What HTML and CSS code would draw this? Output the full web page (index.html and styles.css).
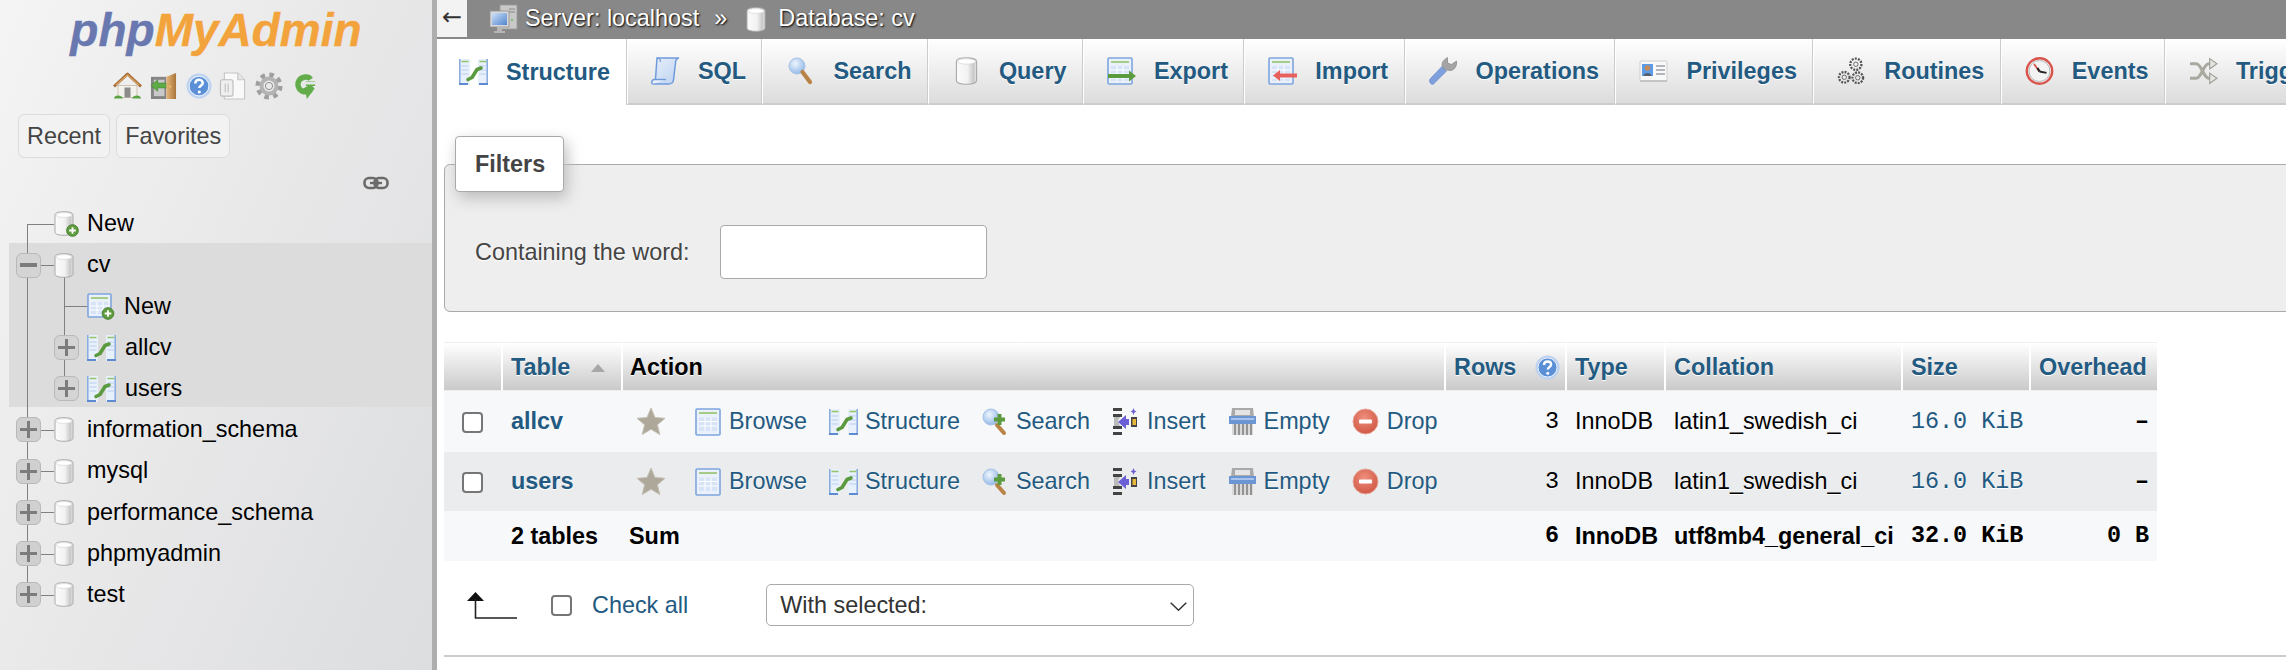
FILE: index.html
```html
<!DOCTYPE html>
<html lang="en">
<head>
<meta charset="utf-8">
<title>phpMyAdmin</title>
<link rel="stylesheet" href="styles.css">
</head>
<body>
<svg class="defs" xmlns="http://www.w3.org/2000/svg">
  <defs>
    <linearGradient id="gDb" x1="0" x2="1" y1="0" y2="0"><stop offset="0" stop-color="#fbfbfb"/><stop offset=".55" stop-color="#f2f2f2"/><stop offset=".85" stop-color="#c8c8c8"/><stop offset="1" stop-color="#e8e8e8"/></linearGradient>
    <linearGradient id="gBlue" x1="0" x2="1" y1="0" y2="1"><stop offset="0" stop-color="#cfe0f8"/><stop offset="1" stop-color="#4f85cf"/></linearGradient>
    <radialGradient id="gLens" cx=".4" cy=".35" r=".7"><stop offset="0" stop-color="#eef5fd"/><stop offset="1" stop-color="#8fb6e6"/></radialGradient>
    <radialGradient id="gDrop" cx=".45" cy=".35" r=".7"><stop offset="0" stop-color="#ee8f7c"/><stop offset="1" stop-color="#cf5442"/></radialGradient>
    <linearGradient id="gDoor" x1="0" x2="1" y1="0" y2="0"><stop offset="0" stop-color="#e6b77c"/><stop offset="1" stop-color="#a9743a"/></linearGradient>
    <linearGradient id="gScroll" x1="0" x2="1" y1="0" y2="1"><stop offset="0" stop-color="#e8f0fb"/><stop offset="1" stop-color="#bcd2f0"/></linearGradient>
  </defs>
  <symbol id="i-db" viewBox="0 0 20 25">
    <path d="M1 4C1 1.6 5 .7 10 .7S19 1.6 19 4V21C19 23.3 15 24.3 10 24.3S1 23.3 1 21Z" fill="url(#gDb)" stroke="#a9a9a9"/>
    <ellipse cx="10" cy="4" rx="8" ry="2.4" fill="#fff" stroke="#d0d0d0" stroke-width=".6"/>
  </symbol>
  <symbol id="i-dbnew" viewBox="0 0 25 26">
    <path d="M1 4C1 1.6 5 .7 10 .7S19 1.6 19 4V21C19 23.3 15 24.3 10 24.3S1 23.3 1 21Z" fill="url(#gDb)" stroke="#a9a9a9"/>
    <ellipse cx="10" cy="4" rx="8" ry="2.4" fill="#fff" stroke="#d0d0d0" stroke-width=".6"/>
    <circle cx="18.5" cy="19.5" r="5.8" fill="#5f9c40" stroke="#467f2c"/>
    <path d="M18.5 16.2v6.6M15.2 19.5h6.6" stroke="#fff" stroke-width="1.8"/>
  </symbol>
  <symbol id="i-table" viewBox="0 0 26 28">
    <rect x="1" y="1" width="24" height="26" rx="1" fill="#eaf1fb" stroke="#7fa5de" stroke-width="1.6"/>
    <path d="M4 5h18" stroke="#93c46a" stroke-width="1.6"/>
    <path d="M4 9.5h18v13.5H4z" fill="#d7e4f8"/>
    <path d="M4 13.5h18M4 18h18M10 9.5V23M16 9.5V23" stroke="#fff" stroke-width="1"/>
  </symbol>
  <symbol id="i-tablenew" viewBox="0 0 28 27">
    <rect x="1" y="1" width="23" height="23" rx="1" fill="#eaf1fb" stroke="#7fa5de" stroke-width="1.6"/>
    <path d="M4 5h17" stroke="#93c46a" stroke-width="1.6"/>
    <path d="M4 9h17v12H4z" fill="#d7e4f8"/>
    <path d="M4 13h17M4 17h17M10 9v12M16 9v12" stroke="#fff" stroke-width="1"/>
    <circle cx="21" cy="20.5" r="5.8" fill="#5f9c40" stroke="#467f2c"/>
    <path d="M21 17.2v6.6M17.7 20.5h6.6" stroke="#fff" stroke-width="1.8"/>
  </symbol>
  <symbol id="i-struct" viewBox="0 0 29 26">
    <path d="M0 0h11v26H0zM19 0h10v26H19z" fill="#e8f0fb"/>
    <path d="M.8 0v26M28.200 0v26" stroke="#85a9e0" stroke-width="1.500"/>
    <path d="M2.500 2.500h7M20.500 2.500h7" stroke="#93c46a" stroke-width="1.500"/>
    <path d="M2.500 7h7M2.500 11h7M2.500 15h7M20.500 7h7M20.500 11h7M20.500 15h7" stroke="#b7cdee" stroke-width="1.200"/>
    <path d="M0 25h9M20 25h9" stroke="#5d8ad0" stroke-width="2"/>
    <path d="M9 20.500l4-2 5-8 4-1.500" fill="none" stroke="#5b9a3e" stroke-width="3.600" stroke-linecap="round" stroke-linejoin="round"/>
  </symbol>
  <symbol id="i-star" viewBox="0 0 30 29">
    <path d="M15 1l4 9.500 10 .8-7.600 6.500 2.400 9.700L15 22.300l-8.800 5.200 2.400-9.700L1 11.300l10-.8z" fill="#aea89a" stroke="#c4bfb3" stroke-linejoin="round"/>
  </symbol>
  <symbol id="i-search" viewBox="0 0 25 28">
    <circle cx="9" cy="9" r="8" fill="url(#gLens)" stroke="#a8c3e6"/>
    <path d="M14.500 15l7.500 10" stroke="#b98345" stroke-width="4.200" stroke-linecap="round"/>
  </symbol>
  <symbol id="i-searchadd" viewBox="0 0 25 28">
    <circle cx="9" cy="9" r="8" fill="url(#gLens)" stroke="#a8c3e6"/>
    <path d="M15 17l7 8" stroke="#b98345" stroke-width="4" stroke-linecap="round"/>
    <path d="M17.500 6v11M12 11.500h11" stroke="#5b9a3e" stroke-width="4"/>
  </symbol>
  <symbol id="i-insert" viewBox="0 0 26 29">
    <path d="M1 1h9v3H1zM1 7h9v3H1zM1 19h9v3H1zM1 25h9v3H1z" fill="#444"/>
    <path d="M2 10h6l-2 4 2 5H2z" fill="#bbb"/>
    <path d="M6 15l8-7v4h3v6h-3v4z" fill="#6b5fd6"/>
    <path d="M19 10h6v10h-6z" fill="#444"/>
    <path d="M20.500 12h3.500v6h-3.500z" fill="#e9b83a"/>
    <path d="M21.500 1l1 2.500 2 1-2 1-1 2.500-1-2.500-2-1 2-1z" fill="#6b5fd6"/>
  </symbol>
  <symbol id="i-empty" viewBox="0 0 29 29">
    <path d="M4 1h21l1 9H3z" fill="#a9a9a9"/>
    <path d="M7 3h15v5H7z" fill="#e4e4e4"/>
    <path d="M1 9h27v8H1z" fill="#6c95d4"/>
    <path d="M3 11h23v2H3z" fill="#a9c3ea"/>
    <path d="M4 17h21v11H4z" fill="#d9d9d9"/>
    <path d="M7 17v11M11 17v11M15 17v11M19 17v11M23 17v11" stroke="#777" stroke-width="1.400"/>
  </symbol>
  <symbol id="i-drop" viewBox="0 0 27 29">
    <circle cx="13.500" cy="14.500" r="12.500" fill="url(#gDrop)" stroke="#e6a99c"/>
    <rect x="7" y="12.500" width="13" height="4" rx="1" fill="#fff"/>
  </symbol>
  <symbol id="i-help" viewBox="0 0 25 25">
    <circle cx="12.500" cy="12.500" r="12" fill="#bcd2f0"/>
    <circle cx="12.500" cy="12.500" r="9.500" fill="#5b8fd6" stroke="#e6eefb" stroke-width="1"/>
    <path d="M9 10c0-2.500 1.700-3.500 3.600-3.500s3.500 1.200 3.500 3c0 2.600-3.300 2.600-3.300 5" fill="none" stroke="#fff" stroke-width="2.400"/>
    <circle cx="12.800" cy="18.300" r="1.500" fill="#fff"/>
  </symbol>
  <symbol id="i-house" viewBox="0 0 29 27">
    <path d="M5 13h19v12H5z" fill="#f3f1ec" stroke="#b9a58a" stroke-width=".6"/>
    <path d="M1 14L14.500 1.500 28 14" fill="none" stroke="#a86f38" stroke-width="3" stroke-linejoin="round"/>
    <path d="M3 12.500L14.500 2.500 26 12.500" fill="none" stroke="#d8a467" stroke-width="1.200"/>
    <path d="M11.500 15h6v10h-6z" fill="#8b8b8b"/>
    <path d="M1 26c0-4 8-4 9 0zM19 26c1-4 9-4 9 0z" fill="#5ba342"/>
  </symbol>
  <symbol id="i-exit" viewBox="0 0 28 29">
    <path d="M1 5h16v23H1z" fill="#858585"/>
    <path d="M4 8h11v17H4z" fill="#c9c9c9"/>
    <path d="M1 14l7-6v3.500h9v5H8V20z" fill="#5eac45" stroke="#3f7e2d" stroke-width=".6"/>
    <path d="M17 5l10-4v27H17z" fill="url(#gDoor)"/>
    <circle cx="21" cy="15" r="1" fill="#f2d05c"/>
  </symbol>
  <symbol id="i-docs" viewBox="0 0 29 29">
    <path d="M5 1h14l7 7v20H5z" fill="#f9f9f9" stroke="#c6c6c6" stroke-width="1.200"/>
    <path d="M19 1v7h7" fill="#e6e6e6" stroke="#c6c6c6" stroke-width="1.200"/>
    <rect x="1" y="8" width="13" height="17" rx="2" fill="#efefef" stroke="#bdbdbd" stroke-width="1.200"/>
    <path d="M6 12v9M9 12v9" stroke="#c9c9c9" stroke-width="1.400"/>
  </symbol>
  <symbol id="i-gear" viewBox="0 0 28 28">
    <circle cx="14" cy="14" r="11.300" fill="none" stroke="#9f9f9f" stroke-width="4.500" stroke-dasharray="4.500 4.380"/>
    <circle cx="14" cy="14" r="7.500" fill="none" stroke="#b3b3b3" stroke-width="4"/>
    <circle cx="14" cy="14" r="3.600" fill="none" stroke="#8f8f8f" stroke-width="1"/>
  </symbol>
  <symbol id="i-reload" viewBox="0 0 23 29">
    <path d="M18 7.500C15.500 4 9 4.500 6 8.500c-3 4.500-.5 11 5 12 3 .5 5.500-.5 7-2" fill="none" stroke="#62ad4a" stroke-width="5.500"/>
    <path d="M13 9.500h9.500V14.500H13zM8 18l10-5 4 4-8 11-1-5z" fill="#62ad4a"/>
    <path d="M13 10h10v3H13z" fill="#e6e7e8"/>
  </symbol>
  <symbol id="i-link" viewBox="0 0 26 14">
    <rect x="1.500" y="2" width="13" height="10" rx="4.500" fill="none" stroke="#6a6a6a" stroke-width="2.600"/>
    <rect x="11.500" y="2" width="13" height="10" rx="4.500" fill="none" stroke="#6a6a6a" stroke-width="2.600"/>
    <path d="M7 7h12" stroke="#6a6a6a" stroke-width="2.400"/>
  </symbol>
  <symbol id="i-computer" viewBox="0 0 29 30">
    <path d="M11 1h17v24H11z" fill="#c9c9c9" stroke="#9a9a9a" stroke-width=".8"/>
    <path d="M20 5h6M20 8h6" stroke="#8a8a8a"/>
    <circle cx="23" cy="16" r="1" fill="#63b74a"/>
    <rect x="1" y="7" width="19" height="16" fill="#d8d8d8" stroke="#8f8f8f" stroke-width=".8"/>
    <rect x="3" y="9" width="15" height="12" fill="url(#gBlue)"/>
    <path d="M8 23h5v4H8zM5 27h11v2H5z" fill="#b5b5b5"/>
  </symbol>
  <symbol id="i-sql" viewBox="0 0 29 28">
    <path d="M6 1h22c-2.500.5-3.500 2.500-3.500 5l-2 17c-.4 3-2.500 4-5 4H1.500c2-.8 2.700-2.500 3-5z" fill="url(#gScroll)" stroke="#6f9bdc" stroke-width="1.500"/>
    <path d="M6 1c3 0 3.500 2 3.500 4" fill="none" stroke="#6f9bdc" stroke-width="1.200"/>
    <path d="M1.500 27c-1.300-1.500-.8-4 1.500-4.500h12" fill="#e9f0fb" stroke="#6f9bdc" stroke-width="1.500"/>
  </symbol>
  <symbol id="i-export" viewBox="0 0 29 28">
    <rect x="1" y="1" width="24" height="26" rx="1" fill="#eaf1fb" stroke="#7fa5de" stroke-width="1.600"/>
    <path d="M4 5h18" stroke="#93c46a" stroke-width="1.600"/>
    <path d="M4 9h18v15H4z" fill="#d7e4f8"/>
    <path d="M4 13h18M4 17h18M4 21h18M10 9v15M16 9v15" stroke="#fff"/>
    <path d="M1 17h21v-3.500l7 5.500-7 5.500V21H1z" fill="#5b9a3e"/>
  </symbol>
  <symbol id="i-import" viewBox="0 0 29 28">
    <rect x="1" y="1" width="24" height="26" rx="1" fill="#eaf1fb" stroke="#7fa5de" stroke-width="1.600"/>
    <path d="M4 5h18" stroke="#93c46a" stroke-width="1.600"/>
    <path d="M4 9h18v15H4z" fill="#d7e4f8"/>
    <path d="M4 13h18M4 17h18M4 21h18M10 9v15M16 9v15" stroke="#fff"/>
    <path d="M29 16.500H12V13l-7 5.500 7 5.500v-3.500h17z" fill="#e8605c"/>
  </symbol>
  <symbol id="i-wrench" viewBox="0 0 29 28">
    <path d="M2.500 27c-2.500-1.500-2.200-4-1-5.500L13 9.500l4.500 4.500L6 25.500c-1 1.300-2.300 2.300-3.500 1.500z" fill="#7fa0dc" stroke="#6a8ccb" stroke-width=".8"/>
    <path d="M13.500 10c-1-3.500 0-6 3-8l2-1.500v5.500l4 1.500 5-3.500c.5 4-1 7.500-4 9-3 1-5 0-6 0z" fill="#a5a5a5" stroke="#8a8a8a" stroke-width=".8"/>
  </symbol>
  <symbol id="i-priv" viewBox="0 0 29 28">
    <rect x="1" y="4" width="27" height="20" rx="1" fill="#f8f8f8" stroke="#cfcfcf"/>
    <rect x="3" y="7" width="11" height="12" fill="#5c9ce6"/>
    <circle cx="8.500" cy="11" r="2.800" fill="#c58a5a"/>
    <path d="M4.500 19c0-4 8-4 8 0z" fill="#54606e"/>
    <path d="M17 9h9M17 13h9M17 17h9" stroke="#9a9fa8" stroke-width="1.600"/>
    <path d="M1 24h27" stroke="#bbb" stroke-width="1.500"/>
  </symbol>
  <symbol id="i-routines" viewBox="0 0 29 29">
    <g fill="none" stroke="#555" stroke-dasharray="2 1.200">
      <circle cx="19" cy="7.500" r="5.800" stroke-width="2.400"/>
      <circle cx="7" cy="21" r="5.500" stroke-width="2.400"/>
      <circle cx="21" cy="21.500" r="5.500" stroke-width="2.400"/>
    </g>
    <g fill="none" stroke="#666"><circle cx="19" cy="7.500" r="2.300"/><circle cx="7" cy="21" r="2.300"/><circle cx="21" cy="21.500" r="2.300"/></g>
  </symbol>
  <symbol id="i-clock" viewBox="0 0 29 28">
    <circle cx="14.500" cy="14" r="12.700" fill="#efefef" stroke="#d9534a" stroke-width="2.400"/>
    <circle cx="14.500" cy="14" r="10.500" fill="#f3f3f3" stroke="#b8b8b8"/>
    <path d="M14.500 14.500L9 7" stroke="#d9534a" stroke-width="1.800"/>
    <path d="M14.500 14.500l7 1.300" stroke="#222" stroke-width="1.800"/>
    <path d="M14.500 14.500l-2-3.500" stroke="#222" stroke-width="2.200"/>
  </symbol>
  <symbol id="i-trigger" viewBox="0 0 28 26">
    <path d="M1 6h6c5 0 7 14 12 14h3M1 20h6c5 0 7-14 12-14h3" fill="none" stroke="#a9a9a0" stroke-width="3"/>
    <path d="M20 1l7 5-7 5zM20 15l7 5-7 5z" fill="#e4e4e0" stroke="#9a9a92"/>
  </symbol>
  <symbol id="i-up" viewBox="0 0 50 27">
    <path d="M0 9L8.500 0 17 9z" fill="#111"/>
    <path d="M8.500 7v19H50" fill="none" stroke="#222" stroke-width="1.600"/>
  </symbol>
  <symbol id="i-chev" viewBox="0 0 17 9">
    <path d="M.7.7L8.500 8.200 16.300.7" fill="none" stroke="#333" stroke-width="1.500"/>
  </symbol>
</svg>

<div class="app">
  <aside class="side">
    <div class="logo"><span class="logo-php">php</span><span class="logo-my">MyAdmin</span></div>
    <div class="quick">
      <svg class="q q-house"><use href="#i-house"/></svg>
      <svg class="q q-exit"><use href="#i-exit"/></svg>
      <svg class="q q-help"><use href="#i-help"/></svg>
      <svg class="q q-docs"><use href="#i-docs"/></svg>
      <svg class="q q-gear"><use href="#i-gear"/></svg>
      <svg class="q q-reload"><use href="#i-reload"/></svg>
    </div>
    <div class="recent">
      <button class="pill" type="button">Recent</button>
      <button class="pill" type="button">Favorites</button>
    </div>
    <div class="linkrow"><svg class="link-ic"><use href="#i-link"/></svg></div>
    <div class="tree">
      <div class="row row-first">
        <span class="noexp"></span>
        <svg class="db-new"><use href="#i-dbnew"/></svg>
        <span class="name">New</span>
      </div>
      <div class="group">
        <div class="row">
          <span class="exp minus"></span>
          <svg class="db"><use href="#i-db"/></svg>
          <span class="name">cv</span>
          <span class="stem"></span>
        </div>
        <div class="row sub sub-new">
          <span class="noexp"></span>
          <span class="indent"></span>
          <svg class="tbl-new"><use href="#i-tablenew"/></svg>
          <span class="name">New</span>
        </div>
        <div class="row sub">
          <span class="noexp"></span>
          <span class="exp plus exp-sub"></span>
          <svg class="tbl"><use href="#i-struct"/></svg>
          <span class="name">allcv</span>
        </div>
        <div class="row sub sub-last">
          <span class="noexp"></span>
          <span class="exp plus exp-sub"></span>
          <svg class="tbl"><use href="#i-struct"/></svg>
          <span class="name">users</span>
        </div>
      </div>
      <div class="row"><span class="exp plus"></span><svg class="db"><use href="#i-db"/></svg><span class="name">information_schema</span></div>
      <div class="row"><span class="exp plus"></span><svg class="db"><use href="#i-db"/></svg><span class="name">mysql</span></div>
      <div class="row"><span class="exp plus"></span><svg class="db"><use href="#i-db"/></svg><span class="name">performance_schema</span></div>
      <div class="row"><span class="exp plus"></span><svg class="db"><use href="#i-db"/></svg><span class="name">phpmyadmin</span></div>
      <div class="row row-last"><span class="exp plus"></span><svg class="db"><use href="#i-db"/></svg><span class="name">test</span></div>
    </div>
  </aside>

  <main class="main">
    <header class="topbar">
      <span class="back">←</span>
      <svg class="top-computer"><use href="#i-computer"/></svg>
      <span class="crumb">Server: localhost</span>
      <span class="sep">»</span>
      <svg class="top-db"><use href="#i-db"/></svg>
      <span class="crumb">Database: cv</span>
    </header>

    <nav class="tabs">
      <a class="tab active"><svg class="tab-ic"><use href="#i-struct"/></svg>Structure</a>
      <a class="tab"><svg class="tab-ic"><use href="#i-sql"/></svg>SQL</a>
      <a class="tab"><svg class="tab-ic"><use href="#i-search"/></svg>Search</a>
      <a class="tab"><svg class="tab-ic"><use href="#i-db"/></svg>Query</a>
      <a class="tab"><svg class="tab-ic"><use href="#i-export"/></svg>Export</a>
      <a class="tab"><svg class="tab-ic"><use href="#i-import"/></svg>Import</a>
      <a class="tab"><svg class="tab-ic"><use href="#i-wrench"/></svg>Operations</a>
      <a class="tab"><svg class="tab-ic"><use href="#i-priv"/></svg>Privileges</a>
      <a class="tab"><svg class="tab-ic"><use href="#i-routines"/></svg>Routines</a>
      <a class="tab"><svg class="tab-ic"><use href="#i-clock"/></svg>Events</a>
      <a class="tab"><svg class="tab-ic"><use href="#i-trigger"/></svg>Triggers</a>
    </nav>

    <div class="content">
      <fieldset class="filters">
        <legend class="filters-title">Filters</legend>
        <label class="filter-row">Containing the word:<input class="filter-input" type="text"></label>
      </fieldset>

      <table class="tables">
        <colgroup>
          <col class="c-check"><col class="c-table"><col class="c-action"><col class="c-rows"><col class="c-type"><col class="c-coll"><col class="c-size"><col class="c-over">
        </colgroup>
        <thead>
          <tr>
            <th></th>
            <th><a class="th-link th-sort">Table<span class="sort-arrow"></span></a></th>
            <th class="th-action">Action</th>
            <th><a class="th-link th-rows">Rows<svg class="help-ic"><use href="#i-help"/></svg></a></th>
            <th><a class="th-link">Type</a></th>
            <th><a class="th-link">Collation</a></th>
            <th><a class="th-link">Size</a></th>
            <th><a class="th-link">Overhead</a></th>
          </tr>
        </thead>
        <tbody>
          <tr class="r1">
            <td class="cell-check"><input class="check" type="checkbox"></td>
            <td><a class="tname">allcv</a></td>
            <td class="cell-action"><div class="actions">
              <svg class="a-star"><use href="#i-star"/></svg>
              <a class="act"><svg class="a-browse"><use href="#i-table"/></svg>Browse</a>
              <a class="act"><svg class="a-struct"><use href="#i-struct"/></svg>Structure</a>
              <a class="act"><svg class="a-search"><use href="#i-searchadd"/></svg>Search</a>
              <a class="act"><svg class="a-insert"><use href="#i-insert"/></svg>Insert</a>
              <a class="act"><svg class="a-empty"><use href="#i-empty"/></svg>Empty</a>
              <a class="act"><svg class="a-drop"><use href="#i-drop"/></svg>Drop</a>
            </div></td>
            <td class="num mono">3</td>
            <td>InnoDB</td>
            <td>latin1_swedish_ci</td>
            <td class="mono link">16.0 KiB</td>
            <td class="num mono dash">–</td>
          </tr>
          <tr class="r2">
            <td class="cell-check"><input class="check" type="checkbox"></td>
            <td><a class="tname">users</a></td>
            <td class="cell-action"><div class="actions">
              <svg class="a-star"><use href="#i-star"/></svg>
              <a class="act"><svg class="a-browse"><use href="#i-table"/></svg>Browse</a>
              <a class="act"><svg class="a-struct"><use href="#i-struct"/></svg>Structure</a>
              <a class="act"><svg class="a-search"><use href="#i-searchadd"/></svg>Search</a>
              <a class="act"><svg class="a-insert"><use href="#i-insert"/></svg>Insert</a>
              <a class="act"><svg class="a-empty"><use href="#i-empty"/></svg>Empty</a>
              <a class="act"><svg class="a-drop"><use href="#i-drop"/></svg>Drop</a>
            </div></td>
            <td class="num mono">3</td>
            <td>InnoDB</td>
            <td>latin1_swedish_ci</td>
            <td class="mono link">16.0 KiB</td>
            <td class="num mono dash">–</td>
          </tr>
          <tr class="r3">
            <td></td>
            <td>2 tables</td>
            <td class="cell-sum">Sum</td>
            <td class="num mono">6</td>
            <td>InnoDB</td>
            <td>utf8mb4_general_ci</td>
            <td class="mono">32.0 KiB</td>
            <td class="num mono">0 B</td>
          </tr>
        </tbody>
      </table>

      <div class="foot">
        <svg class="up-ic"><use href="#i-up"/></svg>
        <input class="check" type="checkbox">
        <a class="checkall">Check all</a>
        <span class="select-wrap">
          <select class="select"><option>With selected:</option></select>
          <svg class="chev"><use href="#i-chev"/></svg>
        </span>
      </div>
      <div class="rule"></div>
    </div>
  </main>
</div>
</body>
</html>
```

FILE: styles.css
```css
* { box-sizing: border-box; }
html, body { margin: 0; height: 670px; overflow: hidden; background: #fff; }
body { font-family: "Liberation Sans", Arial, sans-serif; font-size: 23.4px; color: #000; }
.defs { position: absolute; width: 0; height: 0; }
.app { display: flex; width: 2286px; height: 670px; overflow: hidden; }

/* sidebar */
.side { flex: 0 0 437px; height: 670px; border-right: 5px solid #aeaeae; background: linear-gradient(115deg, #f4f4f4 0%, #e9e9ea 45%, #dcdddf 100%); }
.logo { height: 64px; text-align: center; font-size: 46px; line-height: 60px; font-weight: bold; font-style: italic; -webkit-text-stroke: .4px; }
.logo-php { color: #6a78b0; }
.logo-my { color: #f3a33c; }
.quick { display: flex; height: 36px; padding: 8px 0 0 113px; align-items: flex-start; }
.q { display: block; height: 28px; }
.q-house { width: 29px; margin-right: 8px; }
.q-exit { width: 27px; margin-right: 9px; }
.q-help { width: 26px; height: 26px; margin: 1px 7px 0 0; }
.q-docs { width: 29px; margin-right: 7px; }
.q-gear { width: 28px; margin-right: 10px; }
.q-reload { width: 23px; }
.recent { display: flex; gap: 6px; margin: 14px 0 0 18px; }
.pill { height: 44px; padding: 0 8px; border: 1px solid #dcdcdc; border-radius: 6px; background: #f2f2f2; font: inherit; color: #444; }
.linkrow { display: flex; justify-content: flex-end; height: 45.4px; padding: 18px 43px 0 0; }
.link-ic { width: 26px; height: 14px; }

/* tree */
.group { height: 164px; margin: -2px 0 2.8px 9px; padding-top: 2px; background: #dcdcdc; }
.group .row { margin-left: -9px; }
.row { position: relative; display: flex; align-items: center; height: 41.2px; padding-left: 16px; }
.row::before { content: ""; position: absolute; left: 27px; top: 0; bottom: 0; width: 1px; background: #808080; }
.row-first::before { top: 50%; }
.row-first::after { content: ""; position: absolute; left: 27px; width: 27px; top: 50%; height: 1px; background: #808080; }
.row-last::before { bottom: 50%; }
.row:not(.row-first):not(.sub)::after { content: ""; position: absolute; left: 41px; width: 13px; top: 50%; height: 1px; background: #808080; }
.noexp { flex: 0 0 25px; margin-right: 13px; }
.exp { position: relative; z-index: 1; flex: 0 0 25px; height: 25px; margin-right: 13px; border: 1px solid #b9b9b9; border-radius: 6px; background: #d0d0d0; }
.group .exp { background: #d4d4d4; }
.exp::before { content: ""; position: absolute; left: 3px; right: 3px; top: 10px; height: 3px; background: #7c7c7c; }
.minus::before { top: 9.5px; height: 4px; }
.plus::after { content: ""; position: absolute; top: 3px; bottom: 3px; left: 10px; width: 3px; background: #7c7c7c; }
.db { position: relative; z-index: 1; flex: 0 0 20px; width: 20px; height: 25px; margin-right: 13px; }
.db-new { position: relative; z-index: 1; flex: 0 0 25px; width: 25px; height: 26px; margin: 1px 8px 0 0; }
.name { line-height: 1; }
.stem { position: absolute; left: 64px; top: 32px; bottom: 0; width: 1px; background: #808080; }
.sub::after { content: ""; position: absolute; left: 64px; top: 0; bottom: 0; width: 1px; background: #808080; }
.sub-last::after { bottom: 50%; }
.indent { position: absolute; left: 64px; width: 24px; top: 50%; height: 1px; background: #808080; }
.tbl-new { position: relative; z-index: 1; flex: 0 0 28px; width: 28px; height: 27px; margin: 0 9px 0 33px; }
.exp-sub { margin-right: 8px; }
.tbl { position: relative; z-index: 1; flex: 0 0 29px; width: 29px; height: 26px; margin-right: 9px; }

/* main */
.main { flex: 1 1 auto; min-width: 0; display: flex; flex-direction: column; }
.topbar { display: flex; align-items: flex-start; height: 39px; background: #888; color: #fff; text-shadow: 1px 1px 2px #000; }
.back { flex: 0 0 30px; height: 37px; background: #f3f3f3; color: #333; font-family: "DejaVu Sans", sans-serif; font-size: 24px; line-height: 35px; text-align: center; text-shadow: none; }
.top-computer { flex: 0 0 29px; width: 29px; height: 30px; margin: 4px 7px 0 22px; }
.crumb { line-height: 37px; white-space: nowrap; }
.sep { margin: 0 19px 0 15px; line-height: 37px; }
.top-db { flex: 0 0 20px; width: 20px; height: 25px; margin: 7px 12px 0 0; }

.tabs { display: flex; height: 66px; overflow: hidden; }
.tab { flex: 0 0 auto; display: flex; align-items: center; height: 66px; padding: 0 15.4px 0 23px; border-left: 1px solid #fff; border-right: 1px solid #ccc; border-bottom: 2px solid #ccc; background: linear-gradient(#fff, #dcdcdc); color: #235a81; font-weight: bold; white-space: nowrap; text-shadow: 0 1px 0 #fff; }
.tab.active { padding: 0 16px 0 22px; border-left: 0; border-bottom: 0; background: #fff; }
.tab-ic { flex: 0 0 29px; width: 29px; height: 28px; margin-right: 18px; }

.content { padding-left: 7px; }
.filters { margin: 31px -20px 0 0; padding: 33px 0 32px 30px; border: 1px solid #aaa; border-radius: 6px; background: #eee; }
.filters-title { margin-left: -20px; padding: 0 19px; height: 56px; line-height: 54px; width: 109px; border: 1px solid #aaa; border-radius: 4px; background: #fff; box-shadow: 3px 6px 15px #bbb; color: #444; font-weight: bold; text-shadow: 0 1px 0 #fff; }
.filter-row { display: flex; align-items: center; color: #444; text-shadow: 0 1px 2px #fff; }
.filter-input { width: 267px; height: 54px; margin-left: 30px; border: 1px solid #aaa; border-radius: 4px; background: #fff; }

/* table */
.tables { margin-top: 30px; width: 1713px; table-layout: fixed; border-collapse: separate; border-spacing: 0; color: #000; }
.c-check { width: 59px; } .c-table { width: 120px; } .c-action { width: 823px; } .c-rows { width: 121px; }
.c-type { width: 99px; } .c-coll { width: 237px; } .c-size { width: 128px; } .c-over { width: 126px; }
.tables th { height: 49px; padding: 2px 2px 0 8px; border-top: 1px solid #eee; border-right: 2px solid #fff; border-bottom: 1px solid #eee; background: linear-gradient(#fff, #cacaca); text-align: left; font-weight: bold; white-space: nowrap; text-shadow: 0 1px 0 #fff; }
.tables th:last-child { border-right: 0; }
.tables th.th-action { padding-left: 7px; }
.th-link { color: #235a81; }
.th-sort, .th-rows { display: flex; align-items: center; }
.sort-arrow { width: 0; height: 0; margin-left: 21px; border: 7px solid transparent; border-top: 0; border-bottom: 8px solid #a7a7a7; }
.help-ic { width: 25px; height: 25px; margin-left: 19px; }
.tables td { padding: 0 2px 0 8px; white-space: nowrap; }
.r1 td { height: 61px; background: #f7f8fa; }
.r2 td { height: 59px; background: #ebecee; text-shadow: 0 1px 0 #fff; }
.r3 td { height: 50px; background: #f7f8fa; font-weight: bold; }
.tables td.cell-check { padding: 0 3px 0 0; text-align: center; }
.tables td.cell-sum { padding-left: 6px; }
.tables td.num { padding: 0 8px 0 0; text-align: right; }
.mono { font-family: "Liberation Mono", "Courier New", monospace; }
.link { color: #235a81; }
.dash { font-weight: bold; }
.tname { color: #235a81; font-weight: bold; }
.tables td.cell-action { padding-left: 13px; overflow: hidden; }
.actions { display: flex; align-items: center; color: #235a81; }
.act { display: flex; align-items: center; margin-right: 22px; }
.a-star { flex: 0 0 30px; width: 30px; height: 29px; margin-right: 29px; }
.a-browse { width: 26px; height: 28px; margin-right: 8px; }
.a-struct { width: 29px; height: 26px; margin-right: 7px; }
.a-search { width: 25px; height: 28px; margin-right: 9px; }
.a-insert { width: 26px; height: 29px; margin-right: 9px; }
.a-empty { width: 29px; height: 29px; margin-right: 7px; }
.a-drop { width: 27px; height: 29px; margin-right: 8px; }
.check { width: 21px; height: 21px; margin: 0; appearance: none; border: 2px solid #767676; border-radius: 4px; background: #fff; vertical-align: middle; }

.foot { display: flex; align-items: center; height: 88px; padding-left: 23px; }
.up-ic { flex: 0 0 50px; width: 50px; height: 27px; margin-right: 34px; }
.checkall { margin: 0 78px 0 20px; color: #235a81; }
.select-wrap { position: relative; display: block; width: 428px; height: 42px; }
.select { display: block; width: 100%; height: 100%; padding: 0 40px 0 13px; appearance: none; border: 1px solid #aaa; border-radius: 5px; background: #fff; color: #333; font: inherit; }
.chev { position: absolute; right: 7px; top: 18px; width: 17px; height: 9px; pointer-events: none; }
.rule { height: 2px; margin: 6px -20px 0 0; background: #ccc; }
```
